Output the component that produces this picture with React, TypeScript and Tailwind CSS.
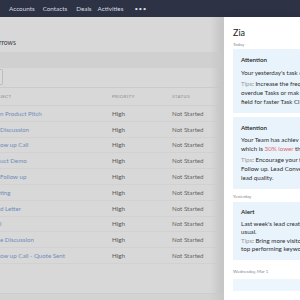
import React from "react";

const rows = [
  "n Product Pitch",
  "Discussion",
  "ow up Call",
  "uct Demo",
  "Follow up",
  "ting",
  "d Letter",
  "l",
  "e Discussion",
  "ow up Call - Quote Sent",
];

export default function App() {
  const font = { fontFamily: "Lato, 'Liberation Sans', Arial, sans-serif" };
  return (
    <div className="w-[300px] h-[300px] overflow-hidden relative bg-[#d8d8d8] flex flex-col" style={font}>
      {/* nav */}
      <div className="h-[17px] shrink-0 bg-[#2d3345] flex items-center text-[6.3px] text-[#d6d9e0]">
        <span className="ml-[9px]">Accounts</span>
        <span className="ml-[8px]">Contacts</span>
        <span className="ml-[9px]">Deals</span>
        <span className="ml-[6px]">Activities</span>
        <span className="ml-[11px] tracking-[0.5px]">•••</span>
      </div>
      <div className="flex flex-1 min-h-0">
        {/* main */}
        <div className="flex-1 min-w-0 flex flex-col relative">
          <div className="h-[35px] shrink-0 flex items-end pb-[5px] text-[6.8px] text-[#3c3c3c]">
            <span className="-ml-[1px]">rrows</span>
          </div>
          <div className="h-[16px] shrink-0 bg-[#d0d0d0]" />
          <div className="h-[20px] shrink-0 flex items-start pt-[1px] border-b border-[#cacaca]">
            <div className="w-[3px] h-[16px] border border-l-0 border-[#bdbdbd] bg-[#dadada] rounded-r-[2px]" />
          </div>
          <div className="h-[18px] shrink-0 grid grid-cols-[112px_60px_1fr] items-center text-[4.6px] tracking-[0.3px] text-[#8d8d8d] border-b border-[#cfcfcf]">
            <span>JECT</span>
            <span>PRIORITY</span>
            <span>STATUS</span>
          </div>
          {rows.map((r) => (
            <div
              key={r}
              className="h-[15.8px] shrink-0 grid grid-cols-[112px_60px_1fr] items-center text-[6.2px] border-b border-[#d1d1d1]"
            >
              <span className="text-[#6f8db8] whitespace-nowrap">{r}</span>
              <span className="text-[#555]">High</span>
              <span className="text-[#666]">Not Started</span>
            </div>
          ))}
          <div className="flex-1" />
          <div className="h-[7px] shrink-0 bg-[#d3d3d3] border-t border-[#cdcdcd]" />
          <div className="absolute right-0 top-0 bottom-0 w-[14px] bg-gradient-to-r from-transparent to-[#c6c6c6]" />
        </div>
        {/* zia */}
        <div className="w-[76px] shrink-0 bg-white pl-[9px] overflow-hidden shadow-[-3px_0_8px_rgba(0,0,0,0.12)] flex flex-col">
          <div className="mt-[10px] text-[9px] leading-[11px] text-[#222]">Zia</div>
          <div className="mt-[3px] text-[4.3px] leading-[7px] text-[#888]">Today</div>
          <div className="mt-[1px] w-[90px] shrink-0 bg-[#e9f3fc] pl-[8px] pt-[6px] pb-[7px] text-[6.2px] text-[#2e2e2e] whitespace-nowrap">
            <div className="leading-[9px] font-semibold text-[#222]">Attention</div>
            <div className="mt-[3.5px] leading-[9px]">Your yesterday's task c</div>
            <div className="mt-[2px] leading-[9px]">
              <span className="text-[#999]">Tips</span>: Increase the freq
            </div>
            <div className="leading-[9px]">overdue Tasks or mak</div>
            <div className="leading-[9px]">field for faster Task Cl</div>
          </div>
          <div className="mt-[4px] w-[90px] shrink-0 bg-[#e9f3fc] pl-[8px] pt-[6px] pb-[7px] text-[6.2px] text-[#2e2e2e] whitespace-nowrap">
            <div className="leading-[9px] font-semibold text-[#222]">Attention</div>
            <div className="mt-[3.5px] leading-[9px]">Your Team has achiev</div>
            <div className="leading-[9px]">
              which is <span className="text-[#e0666b]">30% lower</span> tha
            </div>
            <div className="mt-[2px] leading-[9px]">
              <span className="text-[#999]">Tips</span>: Encourage your f
            </div>
            <div className="leading-[9px]">Follow up. Lead Conve</div>
            <div className="leading-[9px]">lead quality.</div>
          </div>
          <div className="mt-[4px] text-[4.3px] leading-[7px] text-[#888]">Yesterday</div>
          <div className="mt-[2px] w-[90px] shrink-0 bg-[#e9f3fc] pl-[8px] pt-[5px] pb-[6.5px] text-[6.2px] text-[#2e2e2e] whitespace-nowrap">
            <div className="leading-[9px] font-semibold text-[#222]">Alert</div>
            <div className="mt-[3.5px] leading-[8.5px]">Last week's lead creat</div>
            <div className="leading-[8.5px]">usual.</div>
            <div className="leading-[8.5px]">
              <span className="text-[#999]">Tips</span>: Bring more visito
            </div>
            <div className="leading-[8.5px]">top performing keywo</div>
          </div>
          <div className="mt-[7.5px] text-[4.3px] leading-[7px] text-[#888]">Wednesday, Mar 1</div>
          <div className="mt-[4.5px] w-[90px] h-[12px] shrink-0 bg-[#eef6fd]" />
        </div>
      </div>
    </div>
  );
}
